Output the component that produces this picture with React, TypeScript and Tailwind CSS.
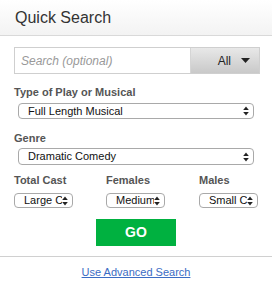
import type { ReactNode } from 'react'

const font = { fontFamily: '"Liberation Sans", Arial, sans-serif' }

function UpDown() {
  return (
    <svg width="6" height="10" viewBox="0 0 6 10" className="shrink-0">
      <path d="M3 0.5 L5.8 4 H0.2 Z" fill="#222" />
      <path d="M3 9.5 L5.8 6 H0.2 Z" fill="#222" />
    </svg>
  )
}

function FakeSelect({ value, className }: { value: string; className: string }) {
  return (
    <div
      className={`flex items-center rounded-[4px] border border-[#a9a9a9] bg-white pr-[4px] ${className}`}
    >
      <span className="min-w-0 flex-1 overflow-hidden whitespace-nowrap text-[11px] leading-none text-[#111]">{value}</span>
      <UpDown />
    </div>
  )
}

function Label({ children, className = '' }: { children: ReactNode; className?: string }) {
  return <div className={`text-[11px] font-bold leading-none text-[#555] ${className}`}>{children}</div>
}

export default function App() {
  return (
    <div className="h-[287px] w-[272px] bg-white" style={font}>
      <div className="flex h-[36px] items-center border-b border-[#d9d9d9] bg-gradient-to-b from-white to-[#f3f3f3] pl-[15px]">
        <h1 className="text-[16px] leading-none text-[#333]">Quick Search</h1>
      </div>

      <div className="px-[14px] pt-[11px]">
        <div className="flex h-[27px] w-[246px] border border-[#cfcfcf]">
          <div className="flex flex-1 items-center border-r border-[#d5d5d5] pl-[6px]">
            <span className="text-[12px] italic text-[#999]">Search (optional)</span>
          </div>
          <div className="flex w-[68px] items-center justify-end gap-[10px] bg-gradient-to-b from-[#e8e8e8] to-[#c9c9c9] pr-[9px]">
            <span className="text-[12px] text-[#222]">All</span>
            <svg width="9" height="5" viewBox="0 0 9 5">
              <path d="M0 0 H9 L4.5 5 Z" fill="#222" />
            </svg>
          </div>
        </div>

        <Label className="mt-[13px]">Type of Play or Musical</Label>
        <FakeSelect value="Full Length Musical" className="ml-[4px] mt-[5px] h-[16px] w-[236px] pl-[9px]" />

        <Label className="mt-[14px]">Genre</Label>
        <FakeSelect value="Dramatic Comedy" className="ml-[4px] mt-[4px] h-[17px] w-[236px] pl-[9px]" />

        <div className="mt-[10px] grid grid-cols-[92px_93px_1fr]">
          <div>
            <Label>Total Cast</Label>
            <FakeSelect value="Large Cast" className="mt-[7px] h-[15px] w-[59px] pl-[9px]" />
          </div>
          <div>
            <Label>Females</Label>
            <FakeSelect value="Medium" className="mt-[7px] h-[15px] w-[59px] pl-[9px]" />
          </div>
          <div>
            <Label>Males</Label>
            <FakeSelect value="Small Cast" className="mt-[7px] h-[15px] w-[59px] pl-[9px]" />
          </div>
        </div>

        <div className="mt-[11px] flex justify-center">
          <button className="h-[27px] w-[80px] bg-[#00b140] text-[14px] font-bold text-white">GO</button>
        </div>
      </div>

      <div className="mt-[10px] border-t border-[#d0d0d0]" />
      <div className="pt-[10px] text-center text-[11px] leading-none">
        <a href="#" className="text-[11px] leading-none text-[#3b6cc4] underline">
          Use Advanced Search
        </a>
      </div>
    </div>
  )
}
